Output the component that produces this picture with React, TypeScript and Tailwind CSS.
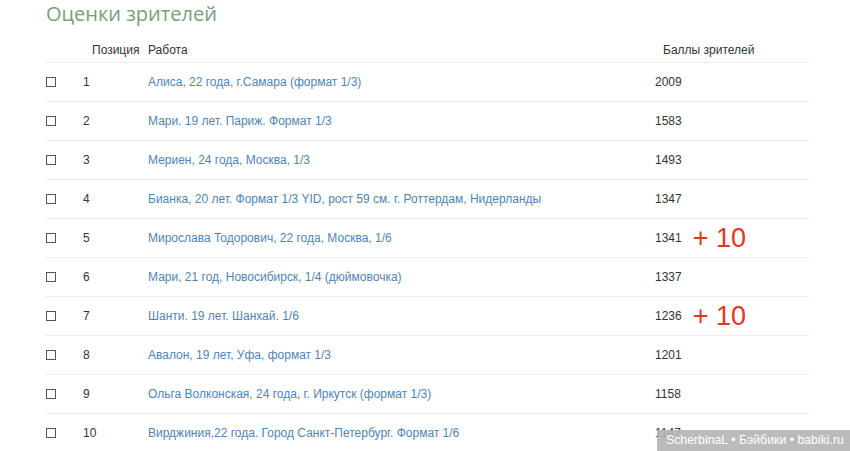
const rows: { pos: number; title: string; score: number; bonus?: string }[] = [
  { pos: 1, title: "Алиса, 22 года, г.Самара (формат 1/3)", score: 2009 },
  { pos: 2, title: "Мари. 19 лет. Париж. Формат 1/3", score: 1583 },
  { pos: 3, title: "Мериен, 24 года, Москва, 1/3", score: 1493 },
  { pos: 4, title: "Бианка, 20 лет. Формат 1/3 YID, рост 59 см. г. Роттердам, Нидерланды", score: 1347 },
  { pos: 5, title: "Мирослава Тодорович, 22 года, Москва, 1/6", score: 1341, bonus: "+ 10" },
  { pos: 6, title: "Мари, 21 год, Новосибирск, 1/4 (дюймовочка)", score: 1337 },
  { pos: 7, title: "Шанти. 19 лет. Шанхай. 1/6", score: 1236, bonus: "+ 10" },
  { pos: 8, title: "Авалон, 19 лет, Уфа, формат 1/3", score: 1201 },
  { pos: 9, title: "Ольга Волконская, 24 года, г. Иркутск (формат 1/3)", score: 1158 },
  { pos: 10, title: "Вирджиния,22 года. Город Санкт-Петербург. Формат 1/6", score: 1147 },
];

export default function App() {
  return (
    <div className="relative h-[451px] w-[850px] overflow-hidden bg-white font-['Liberation_Sans',Arial,sans-serif] text-[12px] text-[#333]">
      <h2 className="pl-[46px] pt-[1px] font-['Open_Sans',sans-serif] text-[20px] leading-[26px] text-[#7a9e7c]">
        Оценки зрителей
      </h2>
      <div className="ml-[45px] mt-[10px] w-[764px]">
        <div className="grid h-[25px] grid-cols-[38px_65px_507px_1fr] items-center">
          <span />
          <span className="pl-[9px]">Позиция</span>
          <span>Работа</span>
          <span className="pl-[8px]">Баллы зрителей</span>
        </div>
        {rows.map((r) => (
          <div
            key={r.pos}
            className="grid h-[39px] grid-cols-[38px_65px_507px_1fr] items-center border-t border-[#ececec]"
          >
            <span className="ml-[1px] block h-[10px] w-[10px] border border-[#555]" />
            <span>{r.pos}</span>
            <span className="text-[#4f84b6]">{r.title}</span>
            <span className="flex items-center">
              {r.score}
              {r.bonus && (
                <span className="ml-[11px] text-[27px] leading-none text-[#e3361c]">{r.bonus}</span>
              )}
            </span>
          </div>
        ))}
      </div>
      <div className="absolute bottom-0 right-0 flex h-[21px] w-[193px] items-center whitespace-nowrap bg-[#b4b4b4]/90 pl-[9px] font-['Liberation_Sans',Arial,sans-serif] text-[12.3px] text-white">
        ScherbinaL • Бэйбики • babiki.ru
      </div>
    </div>
  );
}
